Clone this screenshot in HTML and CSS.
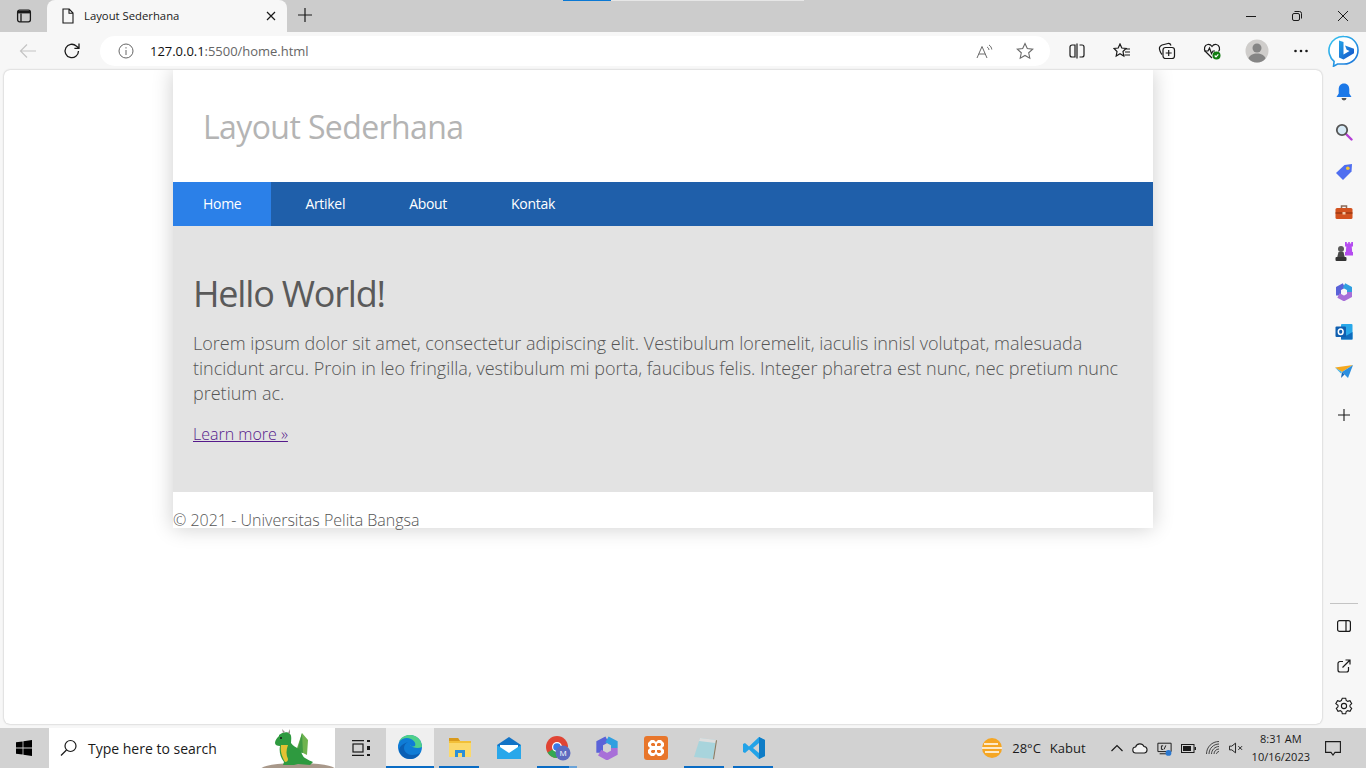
FILE: index.html
```html
<!doctype html>
<html lang="en">

<head>
    <meta charset="UTF-8">
    <title>Layout Sederhana</title>
    <link rel="stylesheet" href="styles.css">
</head>

<body>
    <div class="screen">
        <!-- tab strip -->
        <div class="tabstrip">
            <div class="load-line"><i></i><b></b></div>
            <button class="tab-menu">
                <svg width="16" height="16" viewBox="0 0 16 16" fill="none" stroke="#1a1a1a" stroke-width="1.3"><rect x="1.600" y="2.200" width="12.800" height="11.600" rx="2"/><path d="M5 5.400v8.400"/><path d="M2 3h12v2.400H2z" fill="#1a1a1a" stroke="none"/></svg>
            </button>
            <div class="tab">
                <svg width="14" height="16" viewBox="0 0 14 16" fill="none" stroke="#1a1a1a" stroke-width="1.100"><path d="M2 1h6.200L12 5v10H2zM8 1v4.200h4"/></svg>
                <span class="tab-title">Layout Sederhana</span>
                <svg class="tab-x" width="10" height="10" viewBox="0 0 10 10" stroke="#1a1a1a" stroke-width="1.200"><path d="M1 1l8 8M9 1l-8 8"/></svg>
            </div>
            <svg class="new-tab" width="14" height="14" viewBox="0 0 14 14" stroke="#1a1a1a" stroke-width="1.200"><path d="M7 0v14M0 7h14"/></svg>
            <div class="win-btns">
                <svg width="10" height="10" viewBox="0 0 10 10" stroke="#1a1a1a" stroke-width="1"><path d="M0 5.500h10"/></svg>
                <svg width="10" height="10" viewBox="0 0 10 10" fill="none" stroke="#1a1a1a" stroke-width="1"><rect x=".5" y="2.500" width="7" height="7" rx="1.500"/><path d="M2.500 .5h5a2 2 0 0 1 2 2v5"/></svg>
                <svg width="10" height="10" viewBox="0 0 10 10" stroke="#1a1a1a" stroke-width="1"><path d="M0 0l10 10M10 0L0 10"/></svg>
            </div>
        </div>

        <!-- toolbar -->
        <div class="toolbar">
            <svg class="back" width="18" height="16" viewBox="0 0 18 16" fill="none" stroke="#c4c4c4" stroke-width="1.200"><path d="M17 8H1.500M8 1.500L1.500 8 8 14.500"/></svg>
            <svg class="reload" width="18" height="18" viewBox="0 0 18 18" fill="none" stroke="#1a1a1a" stroke-width="1.300"><path d="M15.500 9a6.700 6.700 0 1 1-2.200-5L16 6.200M16 1.500v4.800h-4.600"/></svg>
            <div class="addressbar">
                <svg class="info" width="16" height="16" viewBox="0 0 16 16" fill="none" stroke="#666" stroke-width="1"><circle cx="8" cy="8" r="7"/><path d="M8 7v5M8 4.200v1.300"/></svg>
                <span class="url"><span class="host">127.0.0.1</span>:5500/home.html</span>
                <svg class="read" width="18" height="16" viewBox="0 0 18 16" fill="none" stroke="#6a6a6a" stroke-width="1"><path d="M1 15L6 3.500 11 15M2.800 11h6.400"/><path d="M11 4c1.200.6 1.800 1.600 2 3M13 2c1.600 1 2.500 2.500 2.800 4.500"/></svg>
                <svg class="star" width="18" height="18" viewBox="0 0 18 18" fill="none" stroke="#6a6a6a" stroke-width="1.100"><path d="M9 1.500l2.300 5 5.400.6-4 3.700 1.100 5.400L9 13.500l-4.800 2.700 1.100-5.400-4-3.700 5.400-.6z"/></svg>
            </div>
            <div class="tools">
                <div class="tool"><svg width="16" height="16" viewBox="0 0 16 16" fill="none" stroke="#1a1a1a" stroke-width="1.200"><path d="M6 2H3a2 2 0 0 0-2 2v8a2 2 0 0 0 2 2h3zM8 .5v15M10.500 2H13a2 2 0 0 1 2 2v8a2 2 0 0 1-2 2h-2.500"/></svg></div>
                <div class="tool"><svg width="18" height="16" viewBox="0 0 18 16" fill="none" stroke="#1a1a1a" stroke-width="1.200"><path d="M7 1l1.800 4 4.200.5-3 3 .8 4.500L7 10.800 3.200 13 4 8.500 1 5.500 5.200 5zM12 6h5M12 9h5M11.500 12h5.500"/></svg></div>
                <div class="tool"><svg width="18" height="18" viewBox="0 0 18 18" fill="none" stroke="#1a1a1a" stroke-width="1.200"><path d="M4 12.500C2.500 11 1 7 1.500 5.500 2 4 3 3.500 4 3l6-1.500c1.500-.3 2.500.5 3 2"/><rect x="5" y="5.500" width="11.500" height="11" rx="2.500"/><path d="M10.700 8v6M7.700 11h6"/></svg></div>
                <div class="tool"><svg width="18" height="18" viewBox="0 0 18 18" fill="none" stroke="#1a1a1a" stroke-width="1.200"><path d="M9 16L2.500 9.500C.5 7 1.500 3 4.700 2.500 6.500 2.200 8 3 9 4.500 10 3 11.500 2.200 13.300 2.500 16.500 3 17.500 7 15.500 9.500"/><path d="M1 9h4l1.500-3 2 5.500L10 9h2"/><circle cx="13.500" cy="13.500" r="4" fill="#107c10" stroke="none"/><path d="M11.700 13.500l1.300 1.300 2.300-2.400" stroke="#fff"/></svg></div>
                <div class="tool"><svg width="24" height="24" viewBox="0 0 24 24"><circle cx="12" cy="12" r="11.500" fill="#cfcdcb"/><circle cx="12" cy="9" r="4.500" fill="#858585"/><path d="M3.500 19.500c1-3.500 4.500-5 8.500-5s7.500 1.500 8.500 5c-2 2.500-5 4-8.500 4s-6.500-1.500-8.500-4z" fill="#858585"/></svg></div>
                <div class="tool"><svg width="16" height="16" viewBox="0 0 16 16" fill="#1a1a1a"><circle cx="2.500" cy="8" r="1.300"/><circle cx="8" cy="8" r="1.300"/><circle cx="13.500" cy="8" r="1.300"/></svg></div>
            </div>
            <svg class="bing" width="32" height="32" viewBox="0 0 32 32"><defs><linearGradient id="bingRing" x1="0" y1="0" x2="1" y2="1"><stop offset="0" stop-color="#37c6f0"/><stop offset="1" stop-color="#1b6fd8"/></linearGradient><linearGradient id="bingB" x1="0" y1="0" x2="1" y2="1"><stop offset="0" stop-color="#25a5e8"/><stop offset="1" stop-color="#1450c8"/></linearGradient></defs><path d="M16 1.500c7.800 0 14 6 14 13.700 0 7.900-6.200 13.800-14 13.800H9.500l-4 2.300.6-5A14 14 0 0 1 16 1.500z" fill="#fff" stroke="url(#bingRing)" stroke-width="1.600"/><path d="M11 5.500l4.500 1.500v12.500l6-3.500-2.800-1.300-1.700-4.200 9 3.200v4.500l-10.500 6.300L11 22.500z" fill="url(#bingB)"/></svg>
        </div>

        <div class="middle">
            <!-- page rendered by the browser -->
            <div class="viewport">
                <div class="wrap">
                    <header class="site-head">
                        <h1>Layout Sederhana</h1>
                    </header>
                    <nav class="site-nav">
                        <a class="active" href="#">Home</a>
                        <a href="#">Artikel</a>
                        <a href="#">About</a>
                        <a href="#">Kontak</a>
                    </nav>
                    <section class="hero">
                        <h2>Hello World!</h2>
                        <p>Lorem ipsum dolor sit amet, consectetur adipiscing elit. Vestibulum loremelit, iaculis innisl volutpat, malesuada tincidunt arcu. Proin in leo fringilla, vestibulum mi porta, faucibus felis. Integer pharetra est nunc, nec pretium nunc pretium ac.</p>
                        <a class="more" href="#">Learn more &raquo;</a>
                    </section>
                    <footer class="site-foot">&copy; 2021 - Universitas Pelita Bangsa</footer>
                </div>
            </div>

            <!-- edge sidebar -->
            <aside class="sidebar">
                <div class="side-item"><svg width="18" height="18" viewBox="0 0 18 18"><path d="M9 .5c3.500 0 5.300 2.500 5.300 6v4L16.500 14h-15l2.200-3.500v-4C3.700 3 5.500.5 9 .5z" fill="#1b78e8"/><path d="M6.500 15h5a2.500 2.500 0 0 1-5 0z" fill="#555"/></svg></div>
                <div class="side-item"><svg width="18" height="18" viewBox="0 0 18 18" fill="none"><path d="M11 11l5.500 5.500" stroke="#b43fd6" stroke-width="2.400" stroke-linecap="round"/><circle cx="7" cy="7" r="5.200" fill="#d6e9f5" stroke="#555" stroke-width="1.800"/></svg></div>
                <div class="side-item"><svg width="18" height="18" viewBox="0 0 18 18"><path d="M1 10L9.500 2 17 1l-.5 7.500L8 17z" fill="#4f6ef0"/><circle cx="12.800" cy="5.200" r="1.800" fill="#f4c430"/></svg></div>
                <div class="side-item"><svg width="18" height="18" viewBox="0 0 18 18"><path d="M6.500 5V3h5v2" fill="none" stroke="#8a6a58" stroke-width="1.500"/><rect x="0.500" y="5" width="17" height="11" rx="1.500" fill="#d2521f"/><path d="M0.500 10h17" stroke="#8f3510" stroke-width="1.200"/><rect x="7.500" y="9" width="3" height="2.500" fill="#f3c9a8"/></svg></div>
                <div class="side-item"><svg width="18" height="20" viewBox="0 0 18 20"><circle cx="6" cy="7" r="3" fill="#5a5a5a"/><path d="M3.500 10h5l1.200 5H2.300z" fill="#484848"/><rect x=".5" y="15" width="11" height="4" rx="1" fill="#333"/><path d="M10 0h1.800v1.500h1.400V0h1.600v1.500h1.400V0H18v4.500h-1.300l.5 5.500H18v3.500h-8V10h.8l.5-5.500H10z" fill="#b54cf0"/></svg></div>
                <div class="side-item"><svg width="18" height="18" viewBox="0 0 18 18" fill="none" stroke-width="5"><path d="M3.500 12.500v-7L9 2.500" stroke="#5a62d8"/><path d="M9 2.500l5.500 3v3.500" stroke="#2f9fe0"/><path d="M14.500 9v3.500L9 15.500l-5.500-3" stroke="#a86fd8"/></svg></div>
                <div class="side-item"><svg width="18" height="18" viewBox="0 0 18 18"><rect x="6" y="1" width="11.500" height="15.500" rx="1" fill="#28a8ea"/><path d="M6 9l5.700 3.500L17.500 9v7.500H6z" fill="#0f6cbd"/><rect x="0.500" y="3.500" width="10.500" height="10.500" rx="1" fill="#0f5fb0"/><ellipse cx="5.700" cy="8.700" rx="2.400" ry="2.800" fill="none" stroke="#fff" stroke-width="1.500"/></svg></div>
                <div class="side-item"><svg width="18" height="16" viewBox="0 0 18 16"><path d="M0 3.500L18 1 7 8z" fill="#f4a81f"/><path d="M18 1L13 14 7 8z" fill="#2b8fe0"/><path d="M7 8l-1 6 3.500-3.500z" fill="#1667b8"/><path d="M0 3.500L7 8l-1 1.500z" fill="#3fb0e8"/></svg></div>
                <div class="side-item side-add"><svg width="14" height="14" viewBox="0 0 14 14" stroke="#1a1a1a" stroke-width="1.100"><path d="M7 1v12M1 7h12"/></svg></div>
                <div class="side-bottom">
                    <div class="side-rule"></div>
                    <div class="side-item"><svg width="14" height="12" viewBox="0 0 14 12" fill="none" stroke="#1a1a1a" stroke-width="1.200"><rect x=".6" y=".6" width="12.800" height="10.800" rx="2"/><path d="M9 .6v10.800"/></svg></div>
                    <div class="side-item"><svg width="14" height="14" viewBox="0 0 14 14" fill="none" stroke="#1a1a1a" stroke-width="1.200"><path d="M6 2.500H3a2 2 0 0 0-2 2V11a2 2 0 0 0 2 2h6.500a2 2 0 0 0 2-2V8M5.500 8.500L13 1M8.500 1H13v4.500"/></svg></div>
                    <div class="side-item"><svg width="18" height="18" viewBox="0 0 18 18" fill="none" stroke="#1a1a1a" stroke-width="1.100"><path d="M7.300 1.200h3.400l.5 2.300 1.500.9 2.300-.7 1.700 3-1.700 1.500v1.600l1.700 1.500-1.700 3-2.300-.7-1.500.9-.5 2.300H7.300l-.5-2.300-1.500-.9-2.300.7-1.700-3 1.700-1.500V8.200L.8 6.700l1.700-3 2.300.7 1.500-.9z"/><circle cx="9" cy="9" r="2.600"/></svg></div>
                </div>
            </aside>
        </div>

        <!-- windows taskbar -->
        <div class="taskbar">
            <svg class="start" width="16" height="16" viewBox="0 0 16 16" fill="#000"><path d="M0 2.300l6.600-.9v6.200H0zM7.400 1.300L16 0v7.600H7.400zM0 8.400h6.600v6.200L0 13.700zM7.400 8.400H16V16l-8.600-1.300z"/></svg>
            <div class="search">
                <svg width="18" height="18" viewBox="0 0 18 18" fill="none" stroke="#1a1a1a" stroke-width="1.200"><circle cx="10.500" cy="7" r="5.500"/><path d="M6.500 11L1 16.500"/></svg>
                <span class="search-text">Type here to search</span>
                <svg class="dragon" width="80" height="40" viewBox="0 0 80 40"><ellipse cx="43" cy="41" rx="37" ry="6" fill="#a8988a"/><path d="M40 26L47 5l6 7-1 15-6-3z" fill="#6fb34f"/><path d="M42 24l5-19 1 20z" fill="#3f9a45"/><path d="M24 7c3-3 9-4 11-1 2 2 1 6 1 9 2 3 5 4 8 6 3 3 3 7 6 9 3 2 6 3 8 4l-3 3-12-1-4 1H28l1-3c-4-5-5-11-4-16-3 0-5-1-5-3 0-3 2-5 4-7z" fill="#2e9a3f"/><path d="M26 17c-1 6 1 12 4 17 2 0 3-1 3-3-2-4-2-9 0-14z" fill="#e3c233"/><circle cx="26" cy="10" r="1" fill="#111"/><path d="M28 5l-1-4 3 3zM33 5l2-4v5z" fill="#9a8f8a"/></svg>
            </div>
            <svg class="taskview" width="18" height="16" viewBox="0 0 18 16" fill="none" stroke="#1a1a1a" stroke-width="1.200"><path d="M0 .6h12M0 15.400h12"/><rect x="1" y="4" width="10" height="8"/><rect x="15" y="0" width="3" height="2" fill="#1a1a1a" stroke="none"/><rect x="15" y="6" width="3" height="4" fill="#1a1a1a" stroke="none"/><rect x="15" y="14" width="3" height="2" fill="#1a1a1a" stroke="none"/></svg>
            <div class="apps">
                <div class="app app-on">
                    <svg width="26" height="26" viewBox="0 0 26 26"><circle cx="13" cy="13" r="12" fill="#0f7cd6"/><path d="M25 13C25 6 20 1 13 1 8 1 4 3 2 8c3-4 8-5 12-3 4 2 5 5 4 7-2 1-5 0-5-1 3 3 8 4 12 2z" fill="#4fd08a"/><path d="M7 14c0-3 2-5 4-6-3 1-8 3-9 8 1 5 5 9 11 9 4 0 8-2 10-6-2 1-5 2-8 2-4 0-8-3-8-7z" fill="#0a5fb4"/></svg>
                </div>
                <div class="app app-line">
                    <svg width="24" height="22" viewBox="0 0 24 22"><path d="M1 1h9l2 3h11v16H1z" fill="#f2c037"/><path d="M1 6h22v14H1z" fill="#fbd96b"/><path d="M7 13h10v7h-3v-4h-4v4H7z" fill="#2b8fd8"/><path d="M1 1h9l2 3H1z" fill="#d99a1c"/></svg>
                </div>
                <div class="app">
                    <svg width="24" height="22" viewBox="0 0 24 22"><path d="M0 8L12 0l12 8v14H0z" fill="#1273c6"/><path d="M3 8h18v6l-9 5-9-5z" fill="#fff"/><path d="M0 8l12 8 12-8v14H0z" fill="#29a7ea"/></svg>
                </div>
                <div class="app app-line app-chrome">
                    <svg width="26" height="26" viewBox="0 0 26 26"><circle cx="12" cy="12" r="11" fill="#e04434"/><path d="M12 12L2.500 17.500A11 11 0 0 0 12 23z" fill="#34a853"/><path d="M12 23a11 11 0 0 0 11-11H12z" fill="#fbc02d"/><circle cx="12" cy="12" r="5" fill="#fff"/><circle cx="12" cy="12" r="3.800" fill="#3b78e7"/><circle cx="18" cy="18" r="7.500" fill="#5c6bc0"/><text class="chrome-m" x="18" y="21">M</text></svg>
                </div>
                <div class="app">
                    <svg width="24" height="24" viewBox="0 0 18 18" fill="none" stroke-width="5"><path d="M3.500 12.500v-7L9 2.500" stroke="#5a62d8"/><path d="M9 2.500l5.500 3v3.500" stroke="#2f9fe0"/><path d="M14.500 9v3.500L9 15.500l-5.500-3" stroke="#a86fd8"/></svg>
                </div>
                <div class="app">
                    <svg width="24" height="24" viewBox="0 0 24 24"><rect width="24" height="24" rx="3" fill="#e8762b"/><path d="M7 4h3l2 2 2-2h3l3 3v3l-2 2 2 2v3l-3 3h-3l-2-2-2 2H7l-3-3v-3l2-2-2-2V7zM8 7L7 8v1l1 1h3V8l-1-1zM14 7l-1 1v2h3l1-1V8l-1-1zM8 14l-1 1v1l1 1h2l1-1v-2zM13 14v2l1 1h2l1-1v-1l-1-1z" fill="#fff" fill-rule="evenodd"/></svg>
                </div>
                <div class="app app-line">
                    <svg width="24" height="24" viewBox="0 0 24 24"><path d="M7 2l16 2-3 19L1 21z" fill="#a8d4dc"/><path d="M7 2l16 2-.5 3L6 5z" fill="#dedede"/><path d="M23 4l1 .5-3 19-1-.5z" fill="#8a7a60"/></svg>
                </div>
                <div class="app app-line">
                    <svg width="24" height="24" viewBox="0 0 24 24"><path d="M17 1l6 3v16l-6 3L7 13.500 3 17l-2-1V8l2-1 4 3.500z" fill="#22a3e8"/><path d="M17 7l-6 5 6 5z" fill="#d2d2d2"/><path d="M17 1l6 3v16l-6 3z" fill="#0f7cc6"/></svg>
                </div>
            </div>
            <div class="tray">
                <svg class="weather" width="22" height="22" viewBox="0 0 22 22"><circle cx="11" cy="11" r="10" fill="#f5a623"/><path d="M3 7h14M1 11h20M4 15h14" stroke="#fff" stroke-width="1.300"/></svg>
                <span class="temp">28°C</span>
                <span class="cond">Kabut</span>
                <svg class="chev" width="12" height="8" viewBox="0 0 12 8" fill="none" stroke="#1a1a1a" stroke-width="1.200"><path d="M.5 7L6 1.500 11.500 7"/></svg>
                <svg width="16" height="12" viewBox="0 0 16 12" fill="none" stroke="#1a1a1a" stroke-width="1.100"><path d="M4 11a3 3 0 0 1-.4-6A4.500 4.500 0 0 1 12 4.500 3.300 3.300 0 0 1 12.500 11z" fill="#f2f2f2"/></svg>
                <svg width="15" height="17" viewBox="0 0 17 17" fill="none" stroke="#1a1a1a" stroke-width="1.100"><path d="M1 2.500h15V12H1zM3 14.500h8"/><path d="M7 5.500H5v4h2M10 5l-2 4.500"/><circle cx="13" cy="13.500" r="3.300" fill="#2b78d0" stroke="none"/></svg>
                <svg width="15" height="9" viewBox="0 0 15 9"><rect x=".5" y=".5" width="12.500" height="8" fill="none" stroke="#1a1a1a"/><rect x="2" y="2" width="8" height="5" fill="#1a1a1a"/><rect x="13.500" y="3" width="1.500" height="3" fill="#1a1a1a"/></svg>
                <svg class="wifi" width="14" height="14" viewBox="0 0 14 14" fill="none" stroke="#333" stroke-width=".9"><path d="M.5 13C.5 6 6 .5 13 .5M3 13c0-5.500 4.500-10 10-10M5.500 13c0-4 3.500-7.500 7.500-7.500M8 13c0-2.500 2-5 5-5"/><path d="M10.500 13c0-1 1-2.500 2.500-2.500"/></svg>
                <svg width="14" height="12" viewBox="0 0 15 12" fill="none" stroke="#1a1a1a" stroke-width="1"><path d="M.5 4h2.500L7 .8v10.400L3 8H.5zM10 4l4 4M14 4l-4 4"/></svg>
                <div class="clock"><span>8:31 AM</span><span>10/16/2023</span></div>
                <svg class="notif" width="16" height="15" viewBox="0 0 16 15" fill="none" stroke="#1a1a1a" stroke-width="1.100"><path d="M.6.6h14.800v10.800H10L8 14l-2-2.600H.6z"/></svg>
            </div>
        </div>
    </div>
</body>

</html>
```

FILE: styles.css
```css
* {
    margin: 0;
    padding: 0;
    box-sizing: border-box;
}

body {
    width: 1366px;
    height: 768px;
    overflow: hidden;
    font-family: "Open Sans", "Noto Sans", sans-serif;
}

svg {
    display: block;
    flex: none;
}

.screen {
    display: flex;
    flex-direction: column;
    height: 768px;
    background: #f7f7f7;
}

/* tab strip */
.tabstrip {
    position: relative;
    display: flex;
    align-items: flex-end;
    height: 32px;
    padding-left: 47px;
    background: #cccccc;
}

.load-line {
    position: absolute;
    top: 0;
    left: 563px;
    display: flex;
    height: 1px;
}

.load-line i {
    width: 48px;
    background: #0a78d4;
}

.load-line b {
    width: 193px;
    background: #e6e6e6;
}

.tab-menu {
    position: absolute;
    left: 16px;
    top: 8px;
    border: 0;
    background: none;
}

.tab {
    display: flex;
    align-items: center;
    width: 240px;
    height: 32px;
    padding: 0 11px 0 14px;
    border-radius: 8px 8px 0 0;
    background: #f7f7f7;
}

.tab-title {
    flex: 1;
    margin: 0 0 2px 9px;
    font: 11.3px "Open Sans", sans-serif;
    color: #1a1a1a;
}

.new-tab {
    margin: 0 0 10px 11px;
}

.win-btns {
    display: flex;
    gap: 36px;
    margin: 0 18px 11px auto;
}

/* toolbar */
.toolbar {
    display: flex;
    align-items: center;
    height: 38px;
    background: #f7f7f7;
}

.back {
    margin-left: 19px;
}

.reload {
    margin-left: 26px;
}

.addressbar {
    display: flex;
    flex: none;
    align-items: center;
    width: 950px;
    height: 30px;
    margin-left: 19px;
    padding: 0 16px 0 18px;
    border-radius: 15px;
    background: #fff;
}

.url {
    flex: 1;
    margin-left: 16px;
    font: 13px "Open Sans", sans-serif;
    letter-spacing: -.03px;
    color: #666;
}

.host {
    color: #111;
}

.read {
    margin-right: 22px;
}

.tools {
    display: flex;
    flex: none;
    margin-left: 5px;
}

.tool {
    display: flex;
    align-items: center;
    justify-content: center;
    width: 44.8px;
}

.bing {
    margin-left: 4px;
}

/* page area */
.middle {
    display: flex;
    flex: 1;
    min-height: 0;
}

.viewport {
    width: 1318px;
    margin: 0 0 4px 4px;
    overflow: hidden;
    border-radius: 6px;
    background: #fff;
    box-shadow: 0 0 2px rgba(0, 0, 0, .3);
}

.wrap {
    width: 980px;
    margin-left: 169px;
    background: #fff;
    box-shadow: 0 0 20px rgba(0, 0, 0, .2);
}

.site-head {
    height: 112px;
    padding: 35px 30px 0;
}

.site-head h1 {
    font-size: 32px;
    font-weight: 400;
    line-height: 44px;
    letter-spacing: -.6px;
    color: #b4b4b4;
}

.site-nav {
    display: flex;
    gap: 4px;
    height: 44px;
    background: #1f5faa;
}

.site-nav a {
    padding: 0 30px;
    font-size: 14px;
    font-weight: 500;
    line-height: 44px;
    letter-spacing: -.3px;
    color: #fff;
    text-decoration: none;
}

.site-nav a.active {
    background: #2b80e8;
}

.hero {
    height: 266px;
    padding: 43px 20px 0;
    background: #e3e3e3;
    color: #555;
}

.hero h2 {
    margin-bottom: 12px;
    font-size: 36px;
    font-weight: 400;
    line-height: 50px;
    letter-spacing: -1.2px;
    color: #5a5a5a;
}

.hero p {
    font-size: 18px;
    font-weight: 300;
    line-height: 25.2px;
}

.more {
    display: inline-block;
    margin-top: 15.1px;
    font-size: 16px;
    font-weight: 300;
    line-height: 25px;
    color: #551a8b;
}

.site-foot {
    height: 36px;
    padding-top: 17px;
    font-size: 16px;
    font-weight: 300;
    line-height: 22px;
    color: #555;
}

/* edge sidebar */
.sidebar {
    display: flex;
    flex-direction: column;
    flex: 1;
    padding: 2px 0 2px;
}

.side-item {
    display: flex;
    align-items: center;
    justify-content: center;
    flex: none;
    height: 40px;
}

.side-add {
    margin-top: 3px;
}

.side-bottom {
    margin-top: auto;
}

.side-rule {
    width: 28px;
    height: 1px;
    margin: 0 auto 2px;
    background: #c4c4c4;
}

/* taskbar */
.taskbar {
    display: flex;
    align-items: center;
    height: 40px;
    background: #d2d2d2;
}

.start {
    margin-left: 16px;
}

.search {
    display: flex;
    align-items: center;
    position: relative;
    width: 286px;
    height: 40px;
    margin-left: 17px;
    padding-left: 11px;
    background: #fff;
    overflow: hidden;
}

.search-text {
    margin-left: 10px;
    font: 14px "Open Sans", sans-serif;
    color: #1a1a1a;
}

.dragon {
    position: absolute;
    right: 0;
    top: 0;
}

.taskview {
    margin-left: 17px;
}

.apps {
    display: flex;
    margin-left: 16px;
}

.app {
    position: relative;
    display: flex;
    align-items: center;
    justify-content: center;
    width: 49px;
    height: 40px;
}

.app-on {
    width: 48px;
    margin-right: 1px;
    background: #efefef;
    border-bottom: 2px solid #0a6cc4;
}

.app-line::after {
    content: "";
    position: absolute;
    left: 4px;
    right: 5px;
    bottom: 0;
    height: 2px;
    background: #0a6cc4;
}

.app-chrome::after {
    background: linear-gradient(to right, #0a6cc4 80%, #6aa3d8 80%);
}

.chrome-m {
    font: 8px "Open Sans", sans-serif;
    fill: #fff;
    text-anchor: middle;
}

.tray {
    display: flex;
    align-items: center;
    margin-left: auto;
    gap: 9px;
    font-size: 13px;
    color: #1a1a1a;
}

.chev {
    margin-left: 16px;
}

.wifi {
    margin-left: 1px;
}

.clock {
    display: flex;
    flex-direction: column;
    align-items: center;
    font-size: 11px;
    line-height: 18px;
}

.notif {
    margin: 0 25px 0 6px;
}
```
